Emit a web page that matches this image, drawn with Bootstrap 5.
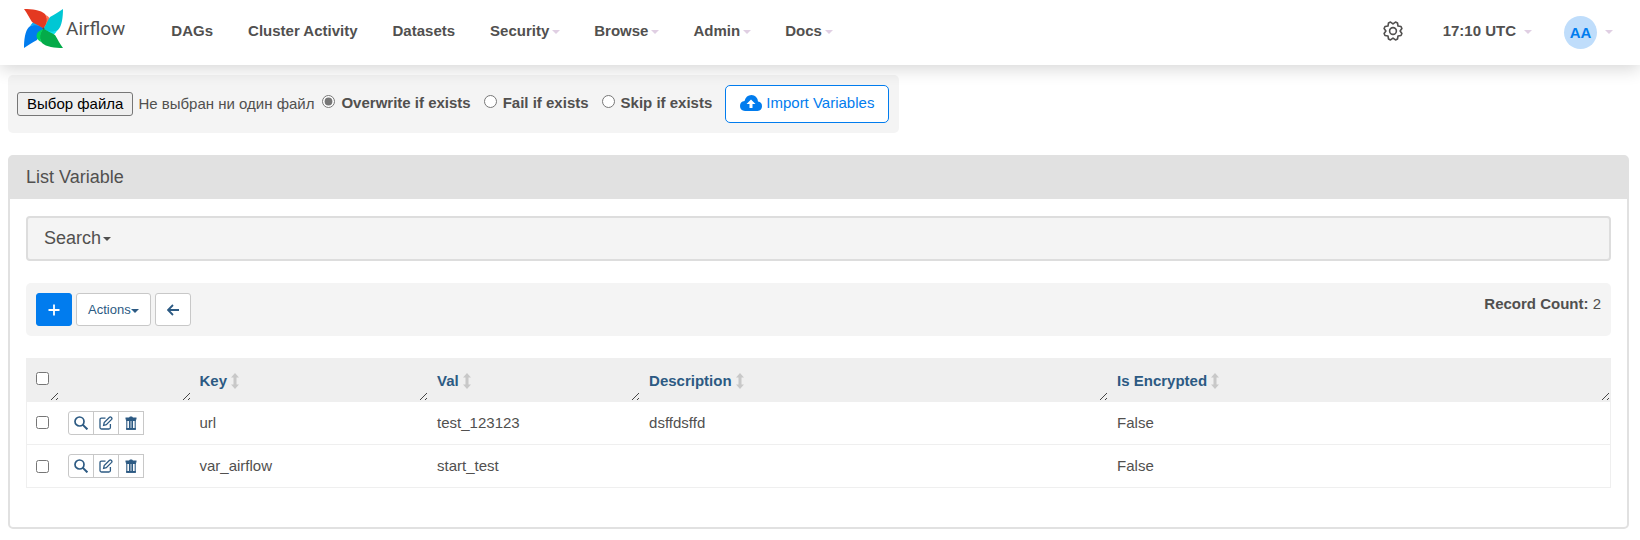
<!DOCTYPE html>
<html lang="en">
<head>
<meta charset="utf-8">
<meta name="viewport" content="width=device-width, initial-scale=1">
<title>List Variable - Airflow</title>
<link href="https://cdn.jsdelivr.net/npm/bootstrap@5.3.0/dist/css/bootstrap.min.css" rel="stylesheet">
<style>
  body { font-family: "Liberation Sans", Arial, sans-serif; font-size: 15px; line-height: 22px; color: #51504f; background: #fff; }
  svg { display: block; flex: none; }
  .topbar { min-height: 65px; padding: 0 27px 0 24px; background: #fff; box-shadow: 0 4px 16px rgba(0,0,0,.16); }
  .topbar .navbar-nav { padding-bottom: 4px; }
  .topbar .navbar-nav .nav-link { color: #51504f; font-weight: 700; padding: 0 16px; }
  .topbar .main-menu { gap: 3px; }
  .topbar .main-menu .has-menu { gap: 3px; padding-right: 15px; }
  .topbar .navbar-brand { font: 19px/24px Roboto, sans-serif; color: #51504f; margin-right: 30px; gap: 3px; }
  .tri { width: 0; height: 0; border: 4px solid transparent; border-top-color: #e0cfe3; border-bottom: 0; flex: none; margin-top: 2px; }
  .tri.dark { border-top-color: currentColor; }
  .avatar { width: 33px; height: 33px; background: #bfddfb; color: #017cee; font-weight: 700; margin-top: 4px; font-size: 15px; }
  .page-area { padding: 10px 11px 11px 8px; }
  .soft { background: #f4f4f4; border-radius: 5px; }
  .import-form { padding: 10px 10px 10px 9px; margin-bottom: 22px; }
  .file-btn { font-size: 15px; line-height: 20px; color: #000; background: #efefef; border: 1px solid #767676; border-radius: 3px; padding: 1px 9px; margin-right: 5px; }
  input[type=radio], input[type=checkbox] { width: 13px; height: 13px; margin: 0; flex: none; accent-color: #767676; }
  .opt { gap: 6px; font-weight: 700; margin-right: 13px; padding-bottom: 2px; }
  .opt input { margin-bottom: 4px; }
  .btn-import { font-size: 15px; line-height: 22px; color: #017cee; background: #fff; border: 1px solid #017cee; border-radius: 5px; padding: 6px 14px 8px; }
  .list-panel { border: 2px solid #e1e1e1; border-radius: 5px; }
  .panel-title { background: #e1e1e1; font-size: 18px; line-height: 22px; padding: 9px 16px 11px; margin: 0; font-weight: 400; }
  .panel-content { padding: 17px 16px 39px; }
  .search-box { width: 100%; background: #f4f4f4; border: 2px solid #ddd; border-radius: 4px; color: #51504f; font-size: 18px; line-height: 22px; padding: 9px 16px 10px; margin-bottom: 22px; gap: 2px; }
  .tools { padding: 10px; margin-bottom: 22px; }
  .tools .btn { height: 33px; border-radius: 3px; font-size: 13px; color: #2c5a83; background: #fff; border: 1px solid #c8c8c8; padding: 0 11px; }
  .tools .btn.add { background: #017cee; border-color: #017cee; color: #fff; }
  .vars { width: 100%; table-layout: fixed; border: 1px solid #efefef; border-collapse: collapse; }
  .vars th { background: #efefef no-repeat right 1px bottom 1px url("data:image/svg+xml,%3Csvg xmlns='http://www.w3.org/2000/svg' width='8' height='8' shape-rendering='crispEdges'%3E%3Cpath d='M.5 7.5L7.5.5M5.5 7.5l2-2' stroke='%23444'/%3E%3C/svg%3E"); height: 43px; padding: 0 9px; }
  .vars td { height: 43px; padding: 0 9px; border-top: 1px solid #efefef; }
  .vars tbody tr:first-child td { border-top: 0; }
  .vars th a { color: #2c5a83; padding-top: 2px; }
  .row-tools .btn { width: 26px; height: 24px; border: 1px solid #c8c8c8; border-radius: 3px 0 0 3px; color: #2c5a83; background: #fff; }
  .row-tools .btn + .btn { margin-left: -1px; border-radius: 0; }
  .pick { width: 32px; } .ops { width: 132px; } .c-key { width: 15%; } .c-val { width: 212px; } .c-desc { width: 468px; }
</style>
</head>
<body>
<svg class="d-none" xmlns="http://www.w3.org/2000/svg">
  <symbol id="i-search" viewBox="0 0 14 14"><circle cx="5.500" cy="5.500" r="4.500" fill="none" stroke="currentColor" stroke-width="1.700"/><path d="M8.600 8.600l4.800 4.800" stroke="currentColor" stroke-width="2"/></symbol>
  <symbol id="i-edit" viewBox="0 0 14 14"><path d="M6.500 2.200H2.500Q1 2.200 1 3.700v7.800q0 1.500 1.500 1.500h7.400q1.500 0 1.500-1.500V8" fill="none" stroke="currentColor" stroke-width="1.300"/><path d="M4.600 9.400l.6-2.800L10.500 1.300q.9-.8 1.900.2t.2 1.900L7.300 8.700z" fill="none" stroke="currentColor" stroke-width="1.300"/></symbol>
  <symbol id="i-trash" viewBox="0 0 14 14"><path d="M1.500 1.500h3.500L6 .5h2l1 1h3.500v2h-11z" fill="currentColor"/><path d="M2.800 4v9.200h8.400V4zM5.500 4.500v8M7 4.500v8M8.500 4.500v8" fill="none" stroke="currentColor" stroke-width="1.100"/><path d="M2.200 3h9.600v2H2.200zM2.200 12h9.600v1.700H2.200z" fill="currentColor"/></symbol>
  <symbol id="i-sort" viewBox="0 0 8 16"><path d="M4 0l4 4.500H5.500v7H8L4 16 0 11.500h2.500v-7H0z" fill="#c8c8c8"/></symbol>
</svg>

<nav class="navbar navbar-expand topbar position-relative">
  <a class="navbar-brand d-flex align-items-center p-0 pb-2" href="#">
    <svg width="39" height="39" viewBox="0 0 39 39">
      <path d="M0 39C0 31 1 22 5 18C10 14 16 16 19.500 19.500C17 23 15 28 13 31C8 34 4 36 0 39Z" fill="#017cee"/>
      <path d="M6 17.500C8 13 12 11 16 14L19.500 19.500C15 16 10 15.500 6 17.500Z" fill="#11a8f5"/>
      <path d="M0 0C8 0 17 1 21 5C25 10 23 16 19.500 19.500C16 17 11 15 8 13C5 8 3 4 0 0Z" fill="#e43921"/>
      <path d="M21.500 6C26 8 28 12 25 16L19.500 19.500C23 15 23.500 10 21.500 6Z" fill="#ff7557"/>
      <path d="M39 0C39 8 38 17 34 21C29 25 23 23 19.500 19.500C22 16 24 11 26 8C31 5 35 3 39 0Z" fill="#00c7d4"/>
      <path d="M33 21.500C31 26 27 28 23 25L19.500 19.500C24 23 29 23.500 33 21.500Z" fill="#11e1ee"/>
      <path d="M39 39C31 39 22 38 18 34C14 29 16 23 19.500 19.500C23 22 28 24 31 26C34 31 36 35 39 39Z" fill="#04ab49"/>
      <path d="M17.500 33C13 31 11 27 14 23L19.500 19.500C16 24 15.500 29 17.500 33Z" fill="#00d45a"/>
      <circle cx="19.500" cy="19.500" r="1" fill="#51504f"/>
    </svg>
    <span>Airflow</span>
  </a>
  <ul class="navbar-nav align-items-center main-menu">
    <li><a class="nav-link" href="#">DAGs</a></li>
    <li><a class="nav-link" href="#">Cluster Activity</a></li>
    <li><a class="nav-link" href="#">Datasets</a></li>
    <li><a class="nav-link has-menu d-flex align-items-center" href="#">Security<span class="tri"></span></a></li>
    <li><a class="nav-link has-menu d-flex align-items-center" href="#">Browse<span class="tri"></span></a></li>
    <li><a class="nav-link has-menu d-flex align-items-center" href="#">Admin<span class="tri"></span></a></li>
    <li><a class="nav-link has-menu d-flex align-items-center" href="#">Docs<span class="tri"></span></a></li>
  </ul>
  <ul class="navbar-nav align-items-center ms-auto">
    <li><a class="nav-link me-2" href="#" aria-label="Settings">
      <svg width="20" height="20" viewBox="0 0 20 20" fill="none" stroke="currentColor" stroke-width="1.600" stroke-linejoin="round"><path d="M12.500 1.100L14.500 2L15 5L18 5.500L18.900 7.500L17.100 10L18.900 12.500L18 14.500L15 15L14.500 18L12.500 18.900L10 17.100L7.500 18.900L5.500 18L5 15L2 14.500L1.100 12.500L2.900 10L1.100 7.500L2 5.500L5 5L5.500 2L7.500 1.100L10 2.900Z"/><circle cx="10" cy="10" r="3.400"/></svg>
    </a></li>
    <li><a class="nav-link d-flex align-items-center gap-2" href="#">17:10 UTC<span class="tri"></span></a></li>
    <li><a class="nav-link d-flex align-items-center gap-2 pe-0" href="#"><span class="avatar rounded-circle d-flex align-items-center justify-content-center">AA</span><span class="tri"></span></a></li>
  </ul>
</nav>

<main class="page-area">
  <form class="import-form soft d-inline-flex align-items-center">
    <input type="file" id="file" class="d-none" aria-label="Файл">
    <button type="button" class="file-btn" onclick="document.getElementById('file').click()">Выбор файла</button>
    <span class="me-2">Не выбран ни один файл</span>
    <label class="opt d-flex align-items-center"><input type="radio" name="action" checked>Overwrite if exists</label>
    <label class="opt d-flex align-items-center"><input type="radio" name="action">Fail if exists</label>
    <label class="opt d-flex align-items-center"><input type="radio" name="action">Skip if exists</label>
    <button type="submit" class="btn btn-import d-flex align-items-center gap-1">
      <svg width="22" height="16" viewBox="0 0 22 16"><path d="M5 16Q0 15.500 0 11T4.500 6Q6 0 11.500 0t6.500 6.500q4 .5 4 4.700T17.500 16z" fill="currentColor"/><path d="M11 4.500l4.500 4.500h-3v4h-3V9h-3z" fill="#fff"/></svg>
      Import Variables</button>
  </form>

  <section class="list-panel">
    <h1 class="panel-title">List Variable</h1>
    <div class="panel-content">
      <button type="button" class="search-box d-flex align-items-center">Search<span class="tri dark"></span></button>
      <div class="tools soft d-flex align-items-start gap-1">
        <button type="button" class="btn add" aria-label="Add"><svg width="12" height="12" viewBox="0 0 12 12"><path d="M6 .5v11M.5 6h11" stroke="currentColor" stroke-width="1.800"/></svg></button>
        <button type="button" class="btn d-flex align-items-center">Actions<span class="tri dark"></span></button>
        <button type="button" class="btn" aria-label="Back"><svg width="12" height="12" viewBox="0 0 12 12"><path d="M12 6H1.500M6 1L1 6l5 5" fill="none" stroke="currentColor" stroke-width="1.800"/></svg></button>
        <div class="ms-auto"><strong>Record Count:</strong> 2</div>
      </div>
      <table class="vars">
        <thead>
          <tr>
            <th class="pick"><input type="checkbox" class="d-block mb-1" aria-label="Select all"></th>
            <th class="ops"></th>
            <th class="c-key"><a href="#" class="d-flex align-items-center gap-1 text-decoration-none">Key<svg width="8" height="16"><use href="#i-sort"/></svg></a></th>
            <th class="c-val"><a href="#" class="d-flex align-items-center gap-1 text-decoration-none">Val<svg width="8" height="16"><use href="#i-sort"/></svg></a></th>
            <th class="c-desc"><a href="#" class="d-flex align-items-center gap-1 text-decoration-none">Description<svg width="8" height="16"><use href="#i-sort"/></svg></a></th>
            <th><a href="#" class="d-flex align-items-center gap-1 text-decoration-none">Is Encrypted<svg width="8" height="16"><use href="#i-sort"/></svg></a></th>
          </tr>
        </thead>
        <tbody>
          <tr>
            <td><input type="checkbox" class="d-block" aria-label="Select url"></td>
            <td><div class="row-tools d-flex">
              <button type="button" class="btn p-0 d-flex align-items-center justify-content-center" aria-label="Show"><svg width="14" height="14"><use href="#i-search"/></svg></button>
              <button type="button" class="btn p-0 d-flex align-items-center justify-content-center" aria-label="Edit"><svg width="14" height="14"><use href="#i-edit"/></svg></button>
              <button type="button" class="btn p-0 d-flex align-items-center justify-content-center" aria-label="Delete"><svg width="14" height="14"><use href="#i-trash"/></svg></button>
            </div></td>
            <td>url</td><td>test_123123</td><td>dsffdsffd</td><td>False</td>
          </tr>
          <tr>
            <td><input type="checkbox" class="d-block" aria-label="Select var_airflow"></td>
            <td><div class="row-tools d-flex">
              <button type="button" class="btn p-0 d-flex align-items-center justify-content-center" aria-label="Show"><svg width="14" height="14"><use href="#i-search"/></svg></button>
              <button type="button" class="btn p-0 d-flex align-items-center justify-content-center" aria-label="Edit"><svg width="14" height="14"><use href="#i-edit"/></svg></button>
              <button type="button" class="btn p-0 d-flex align-items-center justify-content-center" aria-label="Delete"><svg width="14" height="14"><use href="#i-trash"/></svg></button>
            </div></td>
            <td>var_airflow</td><td>start_test</td><td></td><td>False</td>
          </tr>
        </tbody>
      </table>
    </div>
  </section>
</main>
<script src="https://cdn.jsdelivr.net/npm/bootstrap@5.3.0/dist/js/bootstrap.bundle.min.js"></script>
</body>
</html>
